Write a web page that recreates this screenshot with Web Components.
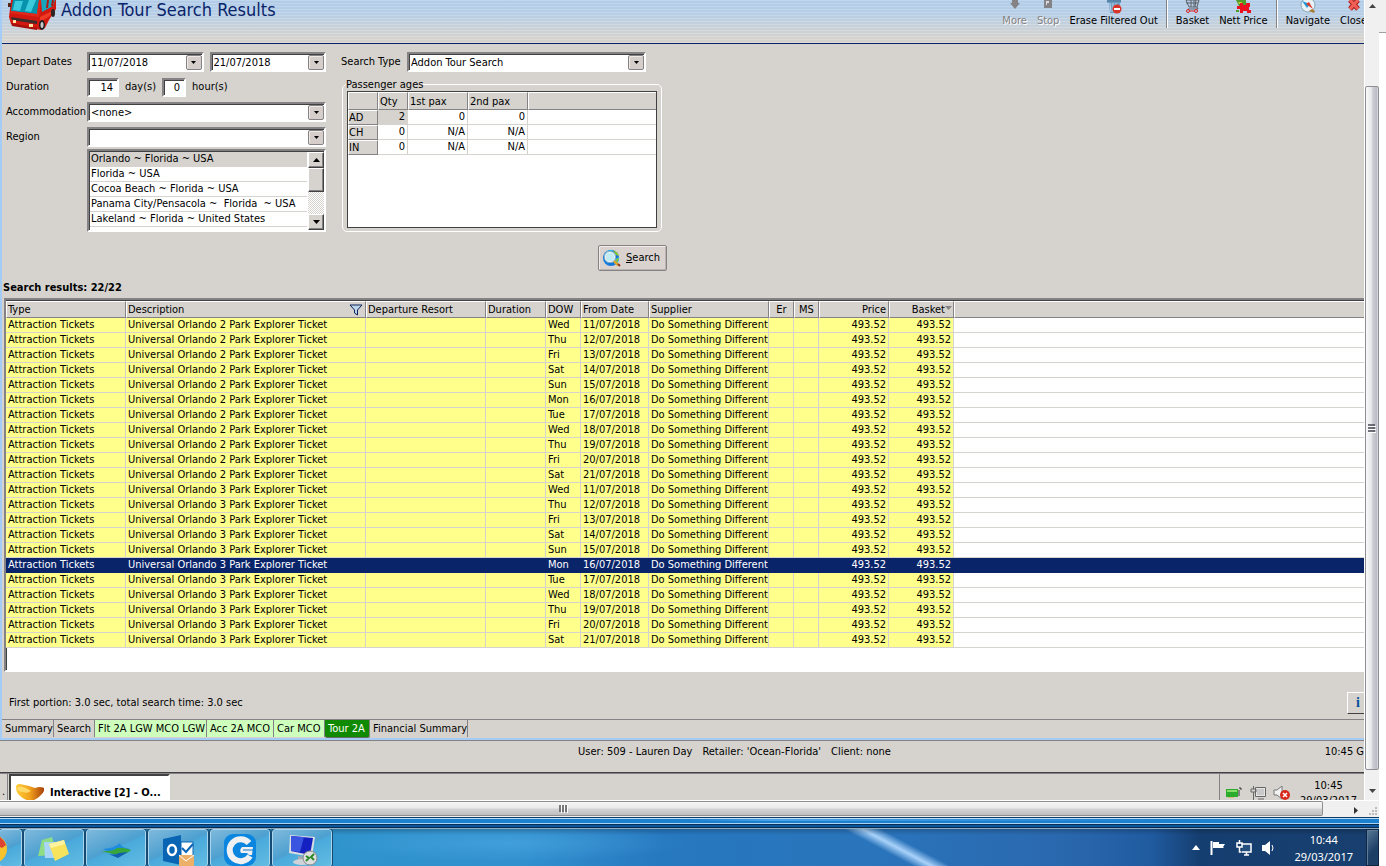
<!DOCTYPE html>
<html lang="en">
<head>
<meta charset="utf-8">
<title>Addon Tour Search Results</title>
<style>
  html, body { height: 100%; margin: 0; }
  body {
    font: 11px/14px "DejaVu Sans Condensed", "DejaVu Sans", sans-serif;
    color: #000;
    background: #fff;
    --face: #d6d3ce;
    --shadow: #848284;
    --dark: #424142;
    --navy: #0a246a;
    overflow: hidden;
  }
</style>
</head>
<body>
<desktop-shell></desktop-shell>

<script>
function define(name, render) {
  customElements.define(name, class extends HTMLElement {
    connectedCallback() {
      if (this.shadowRoot) return;
      this.attachShadow({ mode: 'open' });
      this.shadowRoot.innerHTML = render(this);
    }
  });
}

// Sunken combo box: a select, or a text input when "editable" is set
define('win-combo', el => `
  <style>
    :host { display: flex; min-width: 0; box-sizing: border-box; height: 20px; background: #fff; border: 2px solid; border-color: #848284 #fff #fff #848284; box-shadow: inset 1px 1px #424142; padding: 1px 0 0 1px; }
    select, input { appearance: none; flex: 1; min-width: 0; width: 0; border: 0; margin: 0; padding: 1px 1px 0; background: none; font: inherit; color: inherit; outline: 0; }
    .drop { width: 16px; flex: none; padding: 0; box-sizing: border-box; border: 1px solid #848284; border-radius: 2px; background: #d6cecb; display: grid; place-items: center; box-shadow: inset 1px 1px #efe9e6; }
  </style>
  ${el.hasAttribute('editable')
    ? `<input type="text" aria-label="${el.getAttribute('label')}" value="${el.getAttribute('value')}"><button class="drop" aria-label="Open calendar"><svg width="5" height="3"><path d="M0 0h5L2.500 3z"/></svg></button>`
    : `<select aria-label="${el.getAttribute('label')}"><option>${el.getAttribute('value').replace(/</g, '&lt;')}</option></select><span class="drop"><svg width="5" height="3"><path d="M0 0h5L2.500 3z"/></svg></span>`}
`);

define('win-number', el => `
  <style>
    :host { display: block; }
    input { display: block; width: 100%; height: 19px; box-sizing: border-box; margin: 0; padding: 1px 4px 0; text-align: right; font: inherit; background: #fff; border: 2px solid; border-color: #848284 #fff #fff #848284; box-shadow: inset 1px 1px #424142; }
  </style>
  <input type="text" aria-label="${el.getAttribute('label')}" value="${el.getAttribute('value')}">
`);

const regions = [
  'Orlando ~ Florida ~ USA',
  'Florida ~ USA',
  'Cocoa Beach ~ Florida ~ USA',
  'Panama City/Pensacola ~&nbsp; Florida&nbsp; ~ USA',
  'Lakeland ~ Florida ~ United States'
];

define('region-list', () => `
  <style>
    :host { display: flex; box-sizing: border-box; height: 83px; background: #fff; border: 2px solid; border-color: #848284 #fff #fff #848284; box-shadow: inset 1px 1px #424142; padding: 1px 0 0 1px; overflow: hidden; }
    ul { flex: 1; margin: 0; padding: 0 1px 0 0; list-style: none; white-space: nowrap; overflow: hidden; }
    li { height: 14px; border-bottom: 1px solid var(--face); padding-left: 1px; overflow: hidden; }
    li[aria-selected=true] { background: var(--face); }
    .bar { width: 16px; flex: none; display: flex; flex-direction: column; background: repeating-conic-gradient(#fff 0 25%, var(--face) 0 50%) 0 0 / 2px 2px; }
    .bar > * { box-sizing: border-box; flex: none; width: 16px; height: 16px; margin: 0; padding: 0; background: var(--face); border: 1px solid; border-color: #fff var(--dark) var(--dark) #fff; box-shadow: inset -1px -1px var(--shadow); display: grid; place-items: center; }
    .bar .thumb { height: 24px; }
    .bar .end { margin-top: auto; }
  </style>
  <ul role="listbox" aria-label="Regions">
    ${regions.map((r, i) => `<li role="option" aria-selected="${i === 0}">${r}</li>`).join('')}
  </ul>
  <div class="bar">
    <button aria-label="Up"><svg width="7" height="4"><path d="M0 4h7L3.500 0z"/></svg></button>
    <span class="thumb"></span>
    <button class="end" aria-label="Down"><svg width="7" height="4"><path d="M0 0h7L3.500 4z"/></svg></button>
  </div>
`);

define('passenger-ages', () => `
  <style>
    :host { display: block; }
    fieldset { margin: 0; padding: 0 4px 3px; min-width: 0; border: 1px solid #fff; border-radius: 5px; }
    legend { padding: 0; height: 13px; line-height: 13px; margin-left: -1px; }
    .grid { height: 135px; background: #fff; border: 1px solid var(--dark); overflow: hidden; }
    table { width: 100%; table-layout: fixed; border-spacing: 0; }
    th, td { box-sizing: border-box; padding: 0 2px; font-weight: normal; }
    th { text-align: left; background: var(--face); border: 1px solid; border-color: #fff var(--shadow) var(--shadow) #fff; }
    thead th { height: 18px; padding: 1px 1px 0; }
    thead th:last-child { border-right: 0; }
    tbody th { height: 15px; line-height: 12px; padding: 1px 0 0; }
    td { height: 15px; line-height: 14px; text-align: right; border: solid var(--face); border-width: 0 1px 1px 0; }
    td:last-child { border-right: 0; }
    .on { background: var(--face); }
  </style>
  <fieldset>
    <legend>Passenger ages</legend>
    <div class="grid">
      <table>
        <colgroup><col style="width:30px"><col style="width:30px"><col style="width:60px"><col style="width:60px"><col></colgroup>
        <thead><tr><th></th><th>Qty</th><th>1st pax</th><th>2nd pax</th><th></th></tr></thead>
        <tbody>
          <tr><th>AD</th><td class="on">2</td><td>0</td><td>0</td><td></td></tr>
          <tr><th>CH</th><td>0</td><td>N/A</td><td>N/A</td><td></td></tr>
          <tr><th>IN</th><td>0</td><td>N/A</td><td>N/A</td><td></td></tr>
        </tbody>
      </table>
    </div>
  </fieldset>
`);

define('search-button', () => `
  <style>
    :host { display: block; }
    button { display: flex; align-items: center; gap: 5px; height: 26px; min-width: 69px; box-sizing: border-box; padding: 0 6px 0 4px; font: inherit; background: #d9d2cf; border: 1px solid #848284; border-radius: 2px; box-shadow: inset 1px 1px #f1ecea, inset -1px -1px #bab3b0; }
  </style>
  <button>
    <svg width="18" height="18" viewBox="0 0 18 18">
      <circle cx="8" cy="9" r="8" fill="#1478dc"/>
      <path d="M2 4q4-4 8-3l-3 3-4 3zM11 11l5-3q1 5-4 8z" fill="#36b9e8"/>
      <path d="M10 1q5 2 6 6l-3-1zM13 10l3-1-2 5z" fill="#8ac926"/>
      <circle cx="7" cy="8" r="5" fill="#bfeaf0" stroke="#e8f4f8" stroke-width="2"/>
      <circle cx="7" cy="8" r="5.600" fill="none" stroke="#5b94b4" stroke-width=".7"/>
      <path d="M11 12l4 4" stroke="#e2a52b" stroke-width="2.500"/><path d="M15 15l2 2" stroke="#913b1b" stroke-width="2"/>
    </svg>
    <span><u>S</u>earch</span>
  </button>
`);

define('search-form', () => `
  <style>
    :host { display: flex; align-items: flex-start; gap: 15px; padding: 8px 4px 10px; }
    .criteria { display: grid; grid-template-columns: 81px 239px; grid-auto-rows: minmax(20px, auto); row-gap: 5px; align-content: start; }
    .criteria > label { line-height: 20px; white-space: nowrap; }
    .line { display: flex; align-items: center; gap: 6px; height: 20px; }
    .line > win-combo { flex: 1; }
    .stack { display: grid; gap: 2px; align-content: start; }
    .days { width: 32px; } .hours { width: 24px; }
    .right { width: 326px; display: flex; flex-direction: column; }
    .type { display: flex; }
    .type label { width: 66px; line-height: 20px; white-space: nowrap; }
    .type win-combo { width: 239px; }
    passenger-ages { margin: 6px 5px 13px 1px; }
    search-button { align-self: flex-end; }
  </style>
  <div class="criteria">
    <label>Depart Dates</label>
    <div class="line"><win-combo editable label="Depart from" value="11/07/2018"></win-combo><win-combo editable label="Depart to" value="21/07/2018"></win-combo></div>
    <label>Duration</label>
    <div class="line"><win-number class="days" label="Days" value="14"></win-number><span>day(s)</span><win-number class="hours" label="Hours" value="0"></win-number><span>hour(s)</span></div>
    <label>Accommodation</label>
    <win-combo label="Accommodation" value="<none>"></win-combo>
    <label>Region</label>
    <div class="stack"><win-combo label="Region" value=""></win-combo><region-list></region-list></div>
  </div>
  <div class="right">
    <div class="type"><label>Search Type</label><win-combo label="Search Type" value="Addon Tour Search"></win-combo></div>
    <passenger-ages></passenger-ages>
    <search-button></search-button>
  </div>
`);

const days = ['Wed', 'Thu', 'Fri', 'Sat', 'Sun', 'Mon', 'Tue', 'Wed', 'Thu', 'Fri', 'Sat'];
const results = [2, 3].flatMap(parks => days.map((dow, i) => ({
  parks, dow, date: `${11 + i}/07/2018`, selected: parks === 3 && i === 5
})));

define('results-table', () => `
  <style>
    :host { display: block; background: #fff; border: 2px solid; border-color: #848284 transparent #fff #848284; border-right: 0; box-shadow: inset 1px 1px var(--dark); padding: 1px 0 0; overflow: hidden; }
    table { width: 100%; table-layout: fixed; border-spacing: 0; }
    th, td { box-sizing: border-box; padding: 0 2px 0 1px; white-space: nowrap; overflow: hidden; }
    th { height: 17px; font-weight: normal; text-align: left; background: var(--face); border: 1px solid; border-color: #fff var(--shadow) var(--shadow) #fff; line-height: 14px; }
    th svg { float: right; margin: 1px 0 0; }
    th:last-child { border-right: 0; }
    td { height: 15px; line-height: 14px; padding-left: 2px; background: #ffff8c; border: solid var(--face); border-width: 0 1px 1px 0; }
    td:last-child { background: #fff; border-right: 0; }
    td:nth-child(7) { padding-right: 0; }
    .num { text-align: right; }
    .mid { text-align: center; padding: 0; }
    .sort { padding-right: 1px; }
    .sort svg { float: none; }
    .selected td { background: var(--navy); border-color: var(--navy); color: #fff; }
    .selected td:last-child { background: var(--navy); }
  </style>
  <table>
    <colgroup>${[120, 240, 120, 60, 35, 68, 120, 25, 25, 70, 65].map(w => `<col style="width:${w}px">`).join('')}<col></colgroup>
    <thead>
      <tr>
        <th>Type</th>
        <th>Description<svg width="14" height="12" viewBox="0 0 14 12"><path d="M1 1h12L8.500 6v5L5.500 9V6z" fill="#bcd4ea" stroke="#10245c"/></svg></th>
        <th>Departure Resort</th><th>Duration</th><th>DOW</th><th>From Date</th><th>Supplier</th>
        <th class="mid">Er</th><th class="mid">MS</th><th class="num">Price</th>
        <th class="num sort">Basket<svg width="7" height="7"><path d="M0 0h7L3.500 4z" fill="#848284"/></svg></th><th></th>
      </tr>
    </thead>
    <tbody>
      ${results.map(r => `<tr${r.selected ? ' class="selected"' : ''}><td>Attraction Tickets</td><td>Universal Orlando ${r.parks} Park Explorer Ticket</td><td></td><td></td><td>${r.dow}</td><td>${r.date}</td><td>Do Something Different</td><td></td><td></td><td class="num">493.52</td><td class="num">493.52</td><td></td></tr>`).join('')}
    </tbody>
  </table>
`);

define('tool-button', el => `
  <style>
    :host { display: block; flex: none; }
    button { display: flex; flex-direction: column; align-items: center; width: 100%; padding: 0; border: 0; background: none; font: inherit; white-space: nowrap; height: 28px; }
    button:disabled { color: #848284; text-shadow: 1px 1px #fff; }
    span { display: block; height: 14px; }
  </style>
  <button ${el.hasAttribute('disabled') ? 'disabled' : ''}><span><slot></slot></span>${el.getAttribute('label')}</button>
`);

define('title-banner', () => `
  <style>
    :host { display: flex; height: 43px; border-bottom: 1px solid var(--navy); background: repeating-linear-gradient(#ffffff30 0 1px, transparent 1px 3px), linear-gradient(#b2cde9, #b6cee7 30%, #d6d3ce 90%); overflow: hidden; }
    h1 { flex: 1; margin: 0; padding: 0 0 0 4px; font: 18px/20px "DejaVu Sans Condensed", sans-serif; color: var(--navy); white-space: nowrap; }
    .bus { margin-left: 5px; flex: none; }
    nav { display: flex; gap: 10px; margin-right: -3px; }
    i { width: 1px; height: 28px; background: var(--shadow); border-right: 1px solid #fff; margin: 0 -2px; }
    svg { display: block; }
  </style>
  <svg class="bus" width="50" height="32" viewBox="0 0 50 32">
    <path d="M4 0h45v9l-7 11-4 8-4 2-30-6-2-7z" fill="#d3180f"/>
    <path d="M34 0h14l-2 6-11 6z" fill="#16a5bd"/>
    <path d="M41 0l-1 8M46 0l-1 6" stroke="#b31510" stroke-width="2"/>
    <path d="M6 0h26l-2 14L4 11z" fill="#0793ac"/>
    <path d="M8 1l8 0-3 10-7-1zM22 0h7l-5 12-6-1z" fill="#3ccbdd"/>
    <path d="M4 11l26 3 2-14h2l-2 17-29-4z" fill="#e2281a"/>
    <path d="M4 17l26 4v3L5 20z" fill="#3b2d2b"/>
    <path d="M33 17l12-6-2 5-10 6z" fill="#f03a25"/>
    <path d="M4 23l26 5v2L5 26z" fill="#a50f0a"/>
    <path d="M6 20h3v3H6zM22 24h4v3h-4z" fill="#ffe3a0"/>
    <ellipse cx="35" cy="25" rx="3" ry="5" fill="#222"/><ellipse cx="35" cy="25" rx="1.500" ry="3" fill="#c9c9c9"/>
    <ellipse cx="46" cy="13" rx="2" ry="4" fill="#2b2524"/>
    <path d="M1 3h3v4H1z" fill="#55271c"/>
  </svg>
  <h1>Addon Tour Search Results</h1>
  <nav>
    <tool-button disabled label="More"><svg width="12" height="14"><path d="M3 0h6v3h2L6 9 1 3h2z" fill="#848284"/></svg></tool-button>
    <tool-button disabled label="Stop"><svg width="10" height="14"><path d="M1 0h8v8H1z" fill="#848284"/><path d="M3 1h3v2H4v2H3z" fill="#d8dde2"/></svg></tool-button>
    <tool-button label="Erase Filtered Out"><svg width="18" height="14"><path d="M2 0h14v3h-1l-1 10H5L4 3H2z" fill="#6c9dc4"/><path d="M5 3l1 9M8 3v9M11 3v8" stroke="#b9d4e8"/><path d="M2 1h14" stroke="#45718f"/><circle cx="12" cy="9" r="4.500" fill="#d8342a"/><path d="M9 9h6" stroke="#fff" stroke-width="2"/></svg></tool-button>
    <i></i>
    <tool-button label="Basket"><svg width="18" height="14"><path d="M3 0h13l-2 7H6zM8 0v7M11 0v7M13 0l-1 7M3 3h12" fill="none" stroke="#5b5f66"/><path d="M14 7l1 2H5" fill="none" stroke="#5b5f66"/><circle cx="5" cy="11" r="1.500" fill="none" stroke="#e02020"/><circle cx="13" cy="11" r="1.500" fill="none" stroke="#e02020"/><path d="M7 11h4" stroke="#e02020"/></svg></tool-button>
    <tool-button label="Nett Price"><svg width="18" height="14"><path d="M2 0h10v6H5z" fill="#4f9a28"/><path d="M4 2h4v2H5z" fill="#b8cb39"/><path d="M6 3h3v2h3V3h4v4h-1v3h2v3h-4v-2H9v2H6V9H3V6h3z" fill="#ea1020"/><path d="M2 10h3v2H2z" fill="#4f9a28"/></svg></tool-button>
    <i></i>
    <tool-button label="Navigate"><svg width="18" height="14"><circle cx="9" cy="5" r="7" fill="#e8f1f5" stroke="#88a5b4"/><path d="M3 1l8 3-3 4z" fill="#2099da"/><path d="M7 4l3-2 4 7z" fill="#dd3a2b"/><path d="M10 11l5 2 1-2-3-2z" fill="#a87b35"/></svg></tool-button>
    <tool-button label="Close"><svg width="14" height="14"><path d="M3 0L11 9M11 0L3 9" stroke="#a81e1a" stroke-width="5"/><path d="M3 0L11 9M11 0L3 9" stroke="#f25f57" stroke-width="3"/></svg></tool-button>
  </nav>
`);

define('section-tabs', () => `
  <style>
    :host { display: flex; height: 18px; border-top: 1px solid var(--shadow); }
    button { box-sizing: border-box; padding: 0 0 0 3px; border: 0; border-right: 1px solid var(--shadow); background: none; font: inherit; white-space: nowrap; height: 17px; text-align: left; }
    .done { background: #ceffbd; }
    .active { background: #108a00; color: #fff; border-radius: 0 0 2px 2px; box-shadow: 0 1px #6b6968; }
  </style>
  ${[['Summary', 52], ['Search', 41], ['Flt 2A LGW MCO LGW', 112, 'done'], ['Acc 2A MCO', 67, 'done'], ['Car MCO', 51, 'done'], ['Tour 2A', 45, 'active'], ['Financial Summary', 96]]
    .map(([t, w, c]) => `<button class="${c || ''}" style="min-width:${w}px">${t}</button>`).join('')}
`);

define('tour-window', () => `
  <style>
    :host { display: flex; flex-direction: column; min-height: 0; background: var(--face); border-left: 2px solid #a5cbf7; border-bottom: 2px solid #a5cbf7; }
    h2 { margin: 0 1px 3px; font: bold 11px/14px "DejaVu Sans Condensed", sans-serif; }
    results-table { flex: 1; min-height: 0; margin-left: 2px; }
    .foot { display: flex; height: 47px; align-items: center; padding: 0 0 0 7px; }
    .foot p { flex: 1; margin: 14px 0 0; }
    .info { width: 17px; height: 22px; margin-top: 14px; box-sizing: border-box; padding: 0 0 0 4px; border: 1px solid; border-color: #fff var(--face) var(--dark) #fff; border-right: 0; background: var(--face); font: bold 14px/16px "Liberation Serif", serif; color: #08509c; }
  </style>
  <title-banner></title-banner>
  <search-form></search-form>
  <h2>Search results: 22/22</h2>
  <results-table></results-table>
  <div class="foot"><p>First portion: 3.0 sec, total search time: 3.0 sec</p><button class="info">i</button></div>
  <section-tabs></section-tabs>
`);

define('status-line', () => `
  <style>
    :host { display: grid; grid-template-columns: 1fr auto 1fr; align-items: start; height: 32px; padding-top: 4px; box-sizing: border-box; border-top: 1px solid var(--shadow); background: var(--face); white-space: nowrap; overflow: hidden; }
    .user { display: flex; gap: 10px; grid-column: 2; padding-left: 105px; }
    .time { justify-self: end; }
  </style>
  <div class="user"><span>User: 509 - Lauren Day</span><span>Retailer: 'Ocean-Florida'</span><span>Client: none</span></div>
  <div class="time">10:45 G</div>
`);

// Taskbar of the remote session, cut off by the scroll area
define('session-bar', () => `
  <style>
    :host { display: flex; height: 27px; background: var(--face); border-top: 1px solid var(--dark); box-shadow: inset 0 1px var(--shadow); overflow: hidden; }
    .stub { width: 8px; box-sizing: border-box; padding: 12px 0 0 2px; border-right: 1px solid var(--shadow); }
    .task { display: flex; align-items: flex-start; gap: 6px; width: 161px; height: 40px; box-sizing: border-box; padding: 7px 0 0 5px; margin: 1px 0 0 1px; border: 2px solid; border-color: var(--dark) #fff #fff var(--dark); background: #fff; font: bold 11px/20px "DejaVu Sans Condensed", sans-serif; white-space: nowrap; }
    .tray { margin-left: auto; display: flex; gap: 7px; width: 145px; height: 46px; box-sizing: border-box; border-left: 1px solid var(--shadow); padding: 12px 0 0 5px; }
    .clock { margin: -7px 0 0 2px; line-height: 15px; text-align: center; flex: none; }
    svg { flex: none; }
  </style>
  <div class="stub">.</div>
  <button class="task">
    <svg width="28" height="18"><defs><linearGradient id="g"><stop stop-color="#ffce3a"/><stop offset=".5" stop-color="#f0a01c"/><stop offset="1" stop-color="#a8400a"/></linearGradient></defs><path d="M0 4q0-3 4-3l9 2 6 2q5-2 9 0 1 4-4 8-5 5-11 5-6-2-9-5Q0 10 0 4z" fill="url(#g)"/><path d="M1 5q3-3 9 0l5 3q-4 3-8 1-5 0-6-4z" fill="#ffe27a" opacity=".8"/></svg>
    Interactive [2] - O...
  </button>
  <div class="tray">
    <svg width="18" height="16"><path d="M1 4h12v8H1z" fill="#2cab2c"/><path d="M2 5h10v2H2z" fill="#86df6a"/><path d="M14 3h2M14 5v6M16 3v2" stroke="#333"/><path d="M4 12v1M6 12v1M8 12v1" stroke="#cca52a"/></svg>
    <svg width="16" height="16"><path d="M6 3h9v8H6z" fill="#c9c9c9" stroke="#fff"/><path d="M5.500 2.500h10v9h-10zM8 14h6M3.500 1v3M1 4h5v3H1zM3.500 7v8" fill="none" stroke="#666"/></svg>
    <svg width="18" height="16"><path d="M1 5h3l5-4v13l-5-4H1z" fill="#f2f2f2" stroke="#777"/><circle cx="12" cy="10" r="5" fill="#d8281e"/><path d="M10 8l4 4M14 8l-4 4" stroke="#fff" stroke-width="1.500"/></svg>
    <div class="clock">10:45<br>29/03/2017</div>
  </div>
`);

define('side-scroll', () => `
  <style>
    :host { display: flex; flex-direction: column; width: 15px; box-sizing: border-box; border-left: 1px solid #fff; background: #f0f0f0; }
    button { height: 12px; padding: 0; border: 0; background: none; display: grid; place-items: center; }
    .thumb { flex: 1; margin-top: 74px; border: 1px solid #8e8f96; border-radius: 2px; background: linear-gradient(90deg, #fafafa, #e6e7ea 45%, #cfd0d6 55%, #bbbcc4 90%, #e3e3e6); display: grid; place-items: center; }
    .down { height: 30px; padding-top: 12px; }
  </style>
  <button aria-label="Scroll up"><svg width="7" height="4"><path d="M0 4h7L3.500 0z" fill="#444"/></svg></button>
  <div class="thumb"><svg width="8" height="9"><path d="M0 1h7M0 4h7M0 7h7" stroke="#454a50" stroke-width="1.500"/><path d="M0 2.500h8M0 5.500h8M0 8.500h8" stroke="#fff"/></svg></div>
  <button class="down" aria-label="Scroll down"><svg width="7" height="4"><path d="M0 0h7L3.500 4z" fill="#444"/></svg></button>
`);

define('bottom-scroll', () => `
  <style>
    :host { display: flex; background: #f0f0f0; border-top: 1px solid #fff; box-sizing: border-box; height: 17px; }
    .thumb { flex: 1; margin-right: 32px; border: 1px solid #8e8f8f; border-left: 0; height: 13px; border-radius: 0 2px 2px 0; background: linear-gradient(#f5f5f5, #e9e9eb 48%, #d4d4d6 52%, #bebec1); display: flex; align-items: center; }
    .thumb svg { margin-left: 42%; padding-left: 4px; }
    button { width: 9px; padding: 0; border: 0; margin-left: -4px; margin-right: 4px; background: none; }
    .grip { width: 15px; flex: none; display: grid; place-items: end; }
  </style>
  <div class="thumb"><svg width="9" height="8"><path d="M1 0v7M4 0v7M7 0v7" stroke="#555" stroke-width="1.500"/><path d="M2.500 0v8M5.500 0v8M8.500 0v8" stroke="#fff"/></svg></div>
  <button aria-label="Scroll right"><svg width="4" height="7"><path d="M0 0v7l4-3.500z" fill="#333"/></svg></button>
  <div class="grip"><svg width="12" height="12"><path d="M8 2h2v2H8zM5 5h2v2H5zM8 5h2v2H8zM2 8h2v2H2zM5 8h2v2H5zM8 8h2v2H8z" fill="#bdbdbd"/></svg></div>
`);

const apps = [
  ['Sticky Notes', '<path d="M8 7l10-3 5 18-19 1z" fill="#8fdc86"/><path d="M10 9h12v16H11z" fill="#a9d5f6"/><path d="M15 11l15-4 5 14-14 7z" fill="#f8e45c"/><path d="M15 11l15-4 1 4-14 4z" fill="#fff3a0"/>'],
  ['Travel', '<path d="M7 16q12-1 17-6 0 4 10 6l-12 8z" fill="#1f8be0"/><path d="M4 18q12 1 17-3 6-1 14 2-5 5-13 5z" fill="#38a63a"/><path d="M10 20q7 3 13 0l9-1-10 6z" fill="#1260ae"/>'],
  ['Outlook', '<path d="M5 6l18-4v30L5 28z" fill="#0a64b4"/><path d="M23 9h12v14H23z" fill="#fff" stroke="#0a64b4"/><path d="M24 15l4 4 7-8" stroke="#0a64b4" stroke-width="2" fill="none"/><ellipse cx="14" cy="17" rx="4" ry="5" fill="none" stroke="#fff" stroke-width="2.500"/><path d="M21 22h15v11H21z" fill="#edb068"/><path d="M21 22l7 6 8-6" stroke="#fff" fill="none"/>'],
  ['G Client', '<rect x="4" y="1" width="32" height="32" rx="9" fill="#0a86e0"/><path d="M29 10a11 11 0 1 0 1 13" fill="none" stroke="#eef0f2" stroke-width="6"/><path d="M22 14h11l-1 8h-3l-2-2h-6q-2-3 1-6z" fill="#eef0f2"/><path d="M23 17h10" stroke="#1279c8"/>'],
  ['Remote Desktop', '<path d="M8 2l25 2-3 20L7 20z" fill="#d9dde2"/><path d="M9 3l22 2-3 17-19-4z" fill="#1420c0"/><path d="M9 3l13 1-4 15-9-1z" fill="#3a55e0"/><path d="M16 23l8 1v4l-8-1z" fill="#a4aab0"/><ellipse cx="20" cy="29" rx="9" ry="3" fill="#cfd3d8"/><circle cx="28" cy="25" r="7" fill="#dedede" stroke="#888"/><path d="M24 23l3 2-3 3M32 21l-3 3 3 3" stroke="#2a8a2a" stroke-width="2" fill="none"/>']
];

define('glass-taskbar', () => `
  <style>
    :host { display: flex; height: 37px; overflow: hidden; color: #fff; background:
      linear-gradient(#0003, transparent 6px),
      radial-gradient(closest-side, #58b4ea66, transparent) 330px -4px / 360px 36px no-repeat,
      linear-gradient(28deg, transparent 43%, #a9d2fa 50%, transparent 57%) 797px 0 / 200px 37px no-repeat,
      linear-gradient(90deg, #2c86bc, #2f93cc 25%, #3290cf 38%, #2678bf 48%, #2a74bb 64%, #2a68ae 77%, #205ba0 83.500%, #153e70 87%, #183f6e 100%); }
    .app { box-sizing: border-box; flex: none; width: 60px; height: 38px; margin: 0 0 0 2px; padding: 3px 0 0; border: 1px solid #a9d4ec; border-radius: 3px; outline: 1px solid #154b72; background: linear-gradient(155deg, #7fb9dc, #4da0d0 48%, #4aaadb 52%, #63bce3); }
    .app svg { display: block; margin: auto; }
    .chrome { width: 23px; margin-left: -1px; }
    .chrome svg { margin: 0; }
    .tray { margin-left: auto; display: flex; align-items: center; gap: 9px; }
    .clock { font: 11px/17px "Noto Sans", "Open Sans", sans-serif; text-align: center; padding: 1px 13px 0 8px; }
    .peek { align-self: stretch; width: 13px; box-sizing: border-box; border: 1px solid #0d2743; box-shadow: inset 1px 1px #5d7c9c; background: linear-gradient(135deg, #5b7997, #1d3f66 60%); padding: 0; margin-left: -9px; }
  </style>
  <button class="app chrome" aria-label="Chrome"><svg width="20" height="34"><circle cx="-7" cy="16" r="14" fill="#f7c32d"/><path d="M-7 2a14 14 0 0 1 13 10L2 15-7 10z" fill="#df4332"/><circle cx="-7" cy="16" r="6" fill="#fff"/></svg></button>
  ${apps.map(([n, s]) => `<button class="app" aria-label="${n}"><svg width="40" height="34">${s}</svg></button>`).join('')}
  <div class="tray">
    <svg width="8" height="6"><path d="M0 5h8L4 0z" fill="#fff"/></svg>
    <svg width="18" height="16"><path d="M2.500 1v14" stroke="#fff" stroke-width="2"/><path d="M4 2h6v2h6l-2 3 1 1h-4V8H4z" fill="#fff"/></svg>
    <svg width="16" height="16"><path d="M6 4h9v8H6" fill="#24507f" stroke="#fff" stroke-width="1.500"/><path d="M3.500 0v4M1 3h5v4H1zM3.500 7v5h2M8 15h5M10.500 12v3" fill="none" stroke="#fff" stroke-width="1.500"/></svg>
    <svg width="16" height="16"><path d="M1 5h3l5-4v14l-5-4H1z" fill="#fff"/><path d="M11 5q2 3 0 6" stroke="#fff" fill="none"/></svg>
    <div class="clock">10:44<br>29/03/2017</div>
    <button class="peek" aria-label="Show desktop"></button>
  </div>
`);

define('desktop-shell', () => `
  <style>
    :host { display: flex; height: 100%; }
    .screen { flex: 1; min-width: 0; display: flex; flex-direction: column; }
    .view { flex: 1; min-height: 0; display: flex; }
    .session { flex: 1; min-width: 0; display: flex; flex-direction: column; overflow: hidden; }
    tour-window { flex: 1; }
    .frame { height: 12px; background:
      linear-gradient(90deg, transparent 50%, #6cb8f599 56%, transparent 84%) 0 2px / 100% 2px no-repeat,
      linear-gradient(#103c63 0 1px, #b8dcf5 1px 2px, #1c80d0 2px 6px, #a8d4f4 6px 7px, #0a2f52 7px 8px, #0a57a0 8px 10px, #072c50 10px 11px, #8fa9bf 11px 12px); }
    .edge { width: 7px; background: linear-gradient(#f0f0f0 32px, #a0a0a0 32px 33px, #fff 33px); }
  </style>
  <div class="screen">
    <div class="view">
      <div class="session"><tour-window></tour-window><status-line></status-line><session-bar></session-bar></div>
      <side-scroll></side-scroll>
    </div>
    <bottom-scroll></bottom-scroll>
    <div class="frame"></div>
    <glass-taskbar></glass-taskbar>
  </div>
  <div class="edge"></div>
`);
</script>
</body>
</html>
